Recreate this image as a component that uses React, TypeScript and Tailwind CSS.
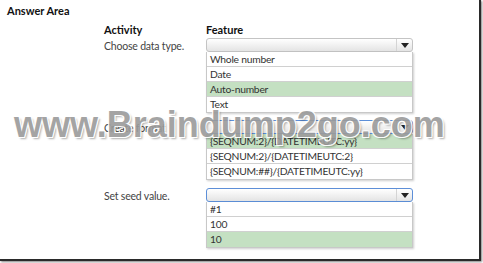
import React from "react";

type DDProps = { focused?: boolean; options: string[]; selected: number };

function Dropdown({ focused, options, selected }: DDProps) {
  return (
    <div className="w-[207px]">
      <div
        className={
          "h-[14px] rounded-[3px] border bg-gradient-to-b from-[#ffffff] to-[#e4e4e4] flex justify-end " +
          (focused ? "border-[#5d8fd8]" : "border-[#c4c4c4]")
        }
      >
        <div className="w-[16px] border-l border-[#d4d4d4] flex items-center justify-center">
          <svg width="8" height="5" viewBox="0 0 8 5">
            <path d="M0 0 L8 0 L4 5 Z" fill="#222" />
          </svg>
        </div>
      </div>
      <div className="border-x border-b border-[#c8c8c8] shadow-[1px_1px_2px_rgba(0,0,0,0.2)] bg-white">
        {options.map((o, i) => (
          <div
            key={i}
            className={
              "h-[15px] px-[3px] text-[10.3px] tracking-[-0.25px] leading-[14px] text-[#333] whitespace-nowrap " +
              (i < options.length - 1 ? "border-b border-[#d0d0d0] " : "") +
              (i === selected ? "bg-[#c4e0c2]" : "bg-white")
            }
          >
            {o}
          </div>
        ))}
      </div>
    </div>
  );
}

export default function App() {
  return (
    <div
      className="w-[483px] h-[263px] bg-white relative overflow-hidden"
      style={{ fontFamily: 'Lato, "Open Sans", sans-serif' }}
    >
      <div className="w-[481px] h-[261px] border-r-2 border-b-2 border-[#2a2a2a] shadow-[1px_1px_2px_rgba(0,0,0,0.5)] bg-white">
        <div className="pl-[7px] pt-[4px] text-[11px] font-bold text-[#111] leading-[14px]">Answer Area</div>
        <div className="pl-[104px] pt-[6px] flex flex-col text-[#444]">
          <div className="flex h-[12px] items-center text-[11px] font-bold text-[#111]">
            <div className="w-[102px]">Activity</div>
            <div>Feature</div>
          </div>
          <div className="flex mt-[2px]">
            <div className="w-[102px] h-[14px] text-[10.5px] tracking-[-0.2px] leading-[14px] mt-[1px]">Choose data type.</div>
            <Dropdown options={["Whole number", "Date", "Auto-number", "Text"]} selected={2} />
          </div>
          <div className="flex mt-[7px]">
            <div className="w-[102px] h-[14px] text-[10.5px] tracking-[-0.2px] leading-[14px] mt-[1px]">Create format</div>
            <Dropdown
              focused
              options={["{SEQNUM:2}/{DATETIMEUTC:yy}", "{SEQNUM:2}/{DATETIMEUTC:2}", "{SEQNUM:##}/{DATETIMEUTC:yy}"]}
              selected={0}
            />
          </div>
          <div className="flex mt-[8px]">
            <div className="w-[102px] h-[14px] text-[10.5px] tracking-[-0.2px] leading-[14px] mt-[1px]">Set seed value.</div>
            <Dropdown focused options={["#1", "100", "10"]} selected={2} />
          </div>
        </div>
      </div>
      <div
        className="absolute left-[14px] top-[105px] text-[36px] font-bold leading-[40px] text-[#9b9b9b] whitespace-nowrap [text-shadow:0_0_1px_#fff,1px_1px_0_#fff,-1px_-1px_0_#fff,1px_-1px_0_#fff,-1px_1px_0_#fff,2px_2px_2px_rgba(0,0,0,0.35)] opacity-90"
        style={{ fontFamily: '"Liberation Sans", Arial, sans-serif' }}
      >
        www.Braindump2go.com
      </div>
    </div>
  );
}
